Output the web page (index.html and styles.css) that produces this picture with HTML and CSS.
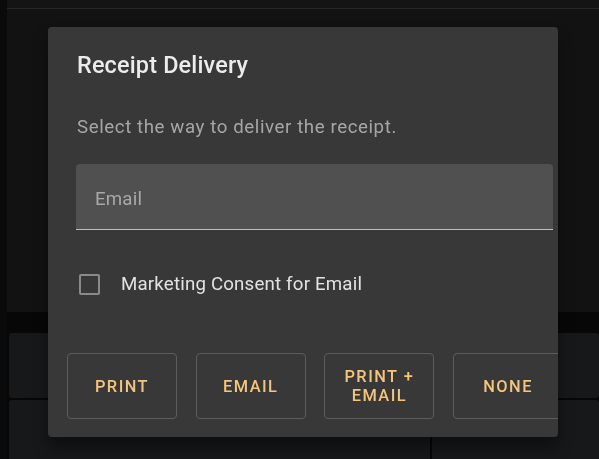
FILE: index.html
```html
<!DOCTYPE html>
<html lang="en">
<head>
    <meta charset="UTF-8">
    <meta name="viewport" content="width=device-width, initial-scale=1.0">
    <title>Receipt Delivery</title>
    <link rel="stylesheet" href="styles.css">
</head>
<body>
    <div class="app">
        <div class="topbar"></div>
        <div class="panel"></div>
        <div class="cards">
            <div class="card"></div>
            <div class="card"></div>
            <div class="card"></div>
            <div class="card"></div>
        </div>
    </div>

    <div class="dialog">
        <h2 class="dialog-title">Receipt Delivery</h2>
        <p class="dialog-text">Select the way to deliver the receipt.</p>

        <div class="field">
            <span class="field-label">Email</span>
        </div>

        <label class="consent">
            <span class="checkbox"></span>
            <span>Marketing Consent for Email</span>
        </label>

        <div class="actions">
            <button class="btn">PRINT</button>
            <button class="btn">EMAIL</button>
            <button class="btn">PRINT +<br>EMAIL</button>
            <button class="btn">NONE</button>
        </div>
    </div>
</body>
</html>
```

FILE: styles.css
```css
body {
    margin: 0;
    background: #0a0a0a;
    font-family: Roboto, "Liberation Sans", sans-serif;
    height: 459px;
    overflow: hidden;
}

.app {
    margin-left: 7px;
    background: #070707;
    height: 459px;
}

.topbar {
    height: 8px;
    background: #141414;
    border-bottom: 1px solid #262626;
}

.panel {
    height: 303px;
    background: #121212;
}

.cards {
    display: grid;
    grid-template-columns: 421px 1fr;
    gap: 2px;
    padding: 21px 0 0 2px;
}

.card {
    height: 65px;
    background: #17181a;
    border-radius: 3px;
}

.dialog {
    position: fixed;
    left: 48px;
    top: 27px;
    width: 510px;
    height: 410px;
    background: #383838;
    border-radius: 4px;
    overflow: hidden;
    box-shadow: 0 11px 15px rgba(0, 0, 0, 0.4);
    box-sizing: border-box;
    padding: 0 0 0 28px;
}

.dialog-title {
    margin: 0;
    padding: 20px 0 0 1px;
    font-size: 23.4px;
    font-weight: 500;
    line-height: 37px;
    letter-spacing: 0.18px;
    color: #ececec;
}

.dialog-text {
    margin: 29px 0 0 1px;
    font-size: 18.7px;
    line-height: 28px;
    letter-spacing: 0.58px;
    color: #a6a6a6;
}

.field {
    margin-top: 23px;
    width: 477px;
    height: 66px;
    background: #505050;
    border-radius: 4px 4px 0 0;
    border-bottom: 1px solid #bdbdbd;
    display: flex;
    align-items: center;
    padding: 4px 0 0 19px;
    box-sizing: border-box;
}

.field-label {
    font-size: 18.7px;
    color: #a8a8a8;
    letter-spacing: 0.18px;
}

.consent {
    margin-top: 40px;
    display: flex;
    align-items: center;
    gap: 21px;
    padding-left: 3px;
    height: 28px;
    font-size: 18.7px;
    color: #e2e2e2;
    letter-spacing: 0.18px;
}

.checkbox {
    width: 17px;
    height: 17px;
    border: 2px solid #8a8a8a;
    border-radius: 2px;
}

.actions {
    display: flex;
    gap: 18.7px;
    margin: 55px 0 0 -9px;
}

.btn {
    flex: 0 0 110px;
    height: 66px;
    background: transparent;
    border: 1px solid #5c5c5c;
    border-radius: 4px;
    color: #f6c57c;
    font-family: Roboto, "Liberation Sans", sans-serif;
    font-size: 16.4px;
    font-weight: 500;
    letter-spacing: 1.46px;
    line-height: 19px;
    padding: 0;
}
```
